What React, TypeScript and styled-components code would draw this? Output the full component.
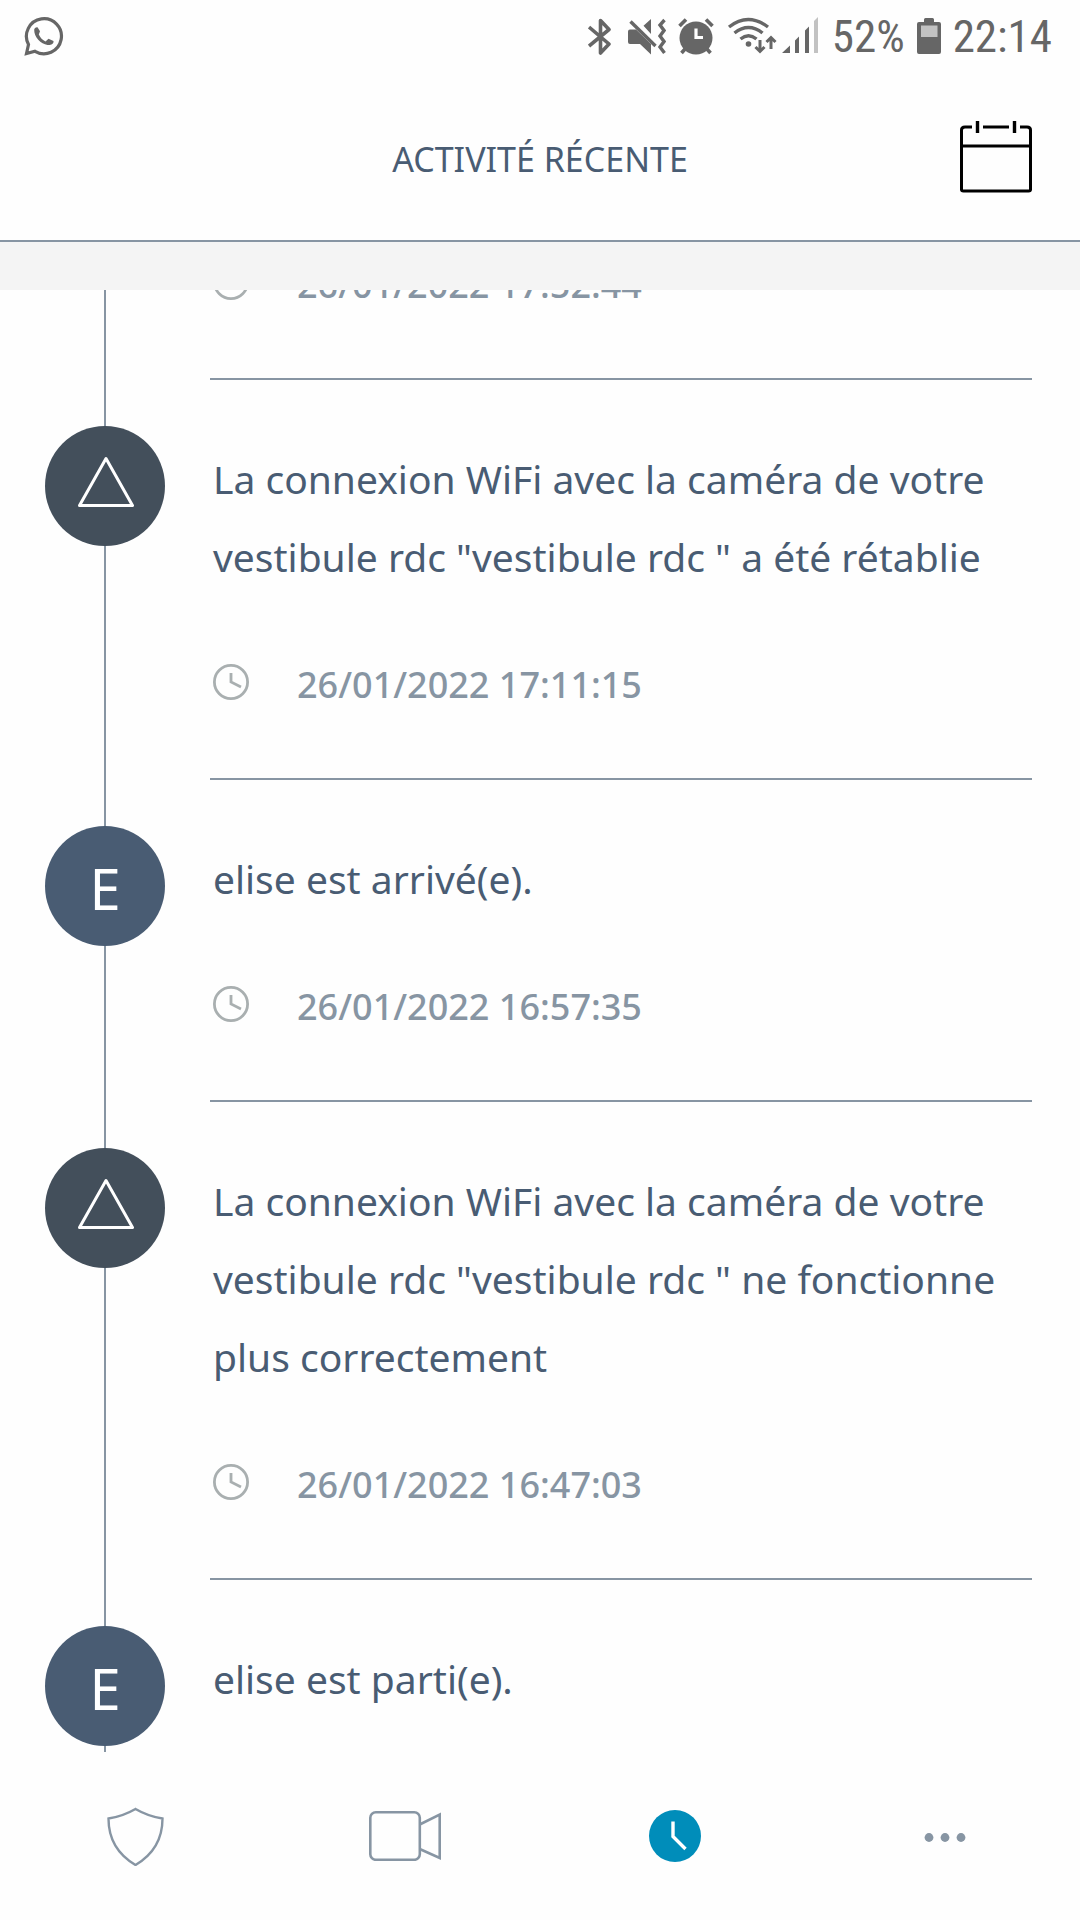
import React from "react";
import styled, { createGlobalStyle } from "styled-components";

const slate = "#495c73";
const mist = "#8795a3";
const statusGrey = "#666666";

const GlobalStyle = createGlobalStyle`
  * { box-sizing: border-box; }
  body { margin: 0; background: #fefefe; }
`;

const Screen = styled.div`
  display: flex;
  flex-direction: column;
  height: 100vh;
  background: #fefefe;
  color: ${slate};
  font-family: "Noto Sans", "Open Sans", sans-serif;
`;

const StatusBar = styled.div`
  display: flex;
  align-items: center;
  justify-content: space-between;
  flex: none;
  height: 74px;
  padding: 0 28px 0 24px;
  color: ${statusGrey};
  font: 45px/48px "Roboto Condensed", Roboto, sans-serif;
`;

const StatusGroup = styled.div`
  display: flex;
  align-items: center;
  gap: 12px;
`;

const Icon = styled.svg`
  display: block;
  flex: none;
`;

const Header = styled.header`
  display: grid;
  grid-template-columns: 1fr auto 1fr;
  align-items: center;
  flex: none;
  height: 168px;
  padding: 0 48px;
  border-bottom: 2px solid ${mist};
`;

const Title = styled.h1`
  grid-column: 2;
  margin: 0;
  padding-top: 4px;
  font-size: 34px;
  line-height: 44px;
  font-weight: 400;
`;

const IconButton = styled.button`
  justify-self: end;
  padding: 0;
  border: 0;
  background: none;
  color: #000;
`;

const Strip = styled.div`
  flex: none;
  height: 48px;
  background: #f4f4f4;
`;

const Feed = styled.main`
  flex: 1;
  min-height: 0;
  overflow: hidden;
  background: linear-gradient(${mist}, ${mist}) 104px 0 / 2px 100% no-repeat;
`;

const EventList = styled.ul`
  margin: -156px 0 0;
  padding: 0;
  list-style: none;
`;

const EventItem = styled.li`
  display: flex;
  padding-right: 48px;
`;

const Rail = styled.div`
  flex: none;
  width: 210px;
  padding: 48px 45px 0;
`;

const Marker = styled.div<{ $color: string }>`
  display: flex;
  align-items: center;
  justify-content: center;
  width: 120px;
  height: 120px;
  border-radius: 50%;
  background: ${(p) => p.$color};
  color: #fff;
`;

const Initial = styled.span`
  padding-top: 4px;
  font-size: 56px;
  line-height: 76px;
`;

const EventBody = styled.div`
  flex: 1;
  min-width: 0;
  padding: 60px 0 65px 3px;
  border-top: 2px solid ${mist};
`;

const Message = styled.p`
  margin: 0;
  font-size: 39px;
  line-height: 78px;
`;

const Stamp = styled.div`
  display: flex;
  align-items: center;
  gap: 48px;
  margin-top: 61px;
  color: ${mist};
  font-size: 36px;
  font-weight: 500;
  line-height: 56px;
`;

const TabBar = styled.nav`
  display: grid;
  grid-template-columns: repeat(4, 1fr);
  flex: none;
  height: 168px;
`;

const Tab = styled.button<{ $active?: boolean }>`
  display: flex;
  align-items: center;
  justify-content: center;
  padding: 0;
  border: 0;
  background: none;
  color: ${(p) => (p.$active ? "#008dba" : mist)};
`;

type Event = { kind?: "alert" | "person"; message?: string; date?: string };

const events: Event[] = [
  { date: "26/01/2022 17:52:44" },
  {
    kind: "alert",
    message: 'La connexion WiFi avec la caméra de votre vestibule rdc "vestibule rdc " a été rétablie',
    date: "26/01/2022 17:11:15",
  },
  { kind: "person", message: "elise est arrivé(e).", date: "26/01/2022 16:57:35" },
  {
    kind: "alert",
    message: 'La connexion WiFi avec la caméra de votre vestibule rdc "vestibule rdc " ne fonctionne plus correctement',
    date: "26/01/2022 16:47:03",
  },
  { kind: "person", message: "elise est parti(e)." },
];

const WhatsAppIcon = () => (
  <Icon width="40" height="40" viewBox="0 0 40 40" fill="none">
    <path d="M2.500 36.500 4.500 27.500A17.500 17.500 0 1 1 11 34.300Z" stroke="currentColor" strokeWidth="3.2" />
    <path
      d="M10.200 12.500C10.500 11 11.500 10 13.500 10.200L16 14.300 14.800 17.500C16.200 20.500 18 22.800 21.500 24.500L24.500 21.800L29.500 24C30 27 26.500 28.500 23.500 28C17 27 9.800 20 10.200 12.500Z"
      fill="currentColor"
    />
  </Icon>
);

const BluetoothIcon = () => (
  <Icon width="28" height="40" viewBox="0 0 28 40" fill="none" stroke="currentColor" strokeWidth="3.6">
    <path d="M1 10 21 27 12.500 36V3.500L21 12.500 1 29" strokeLinejoin="round" />
  </Icon>
);

const MuteVibrateIcon = () => (
  <Icon width="38" height="40" viewBox="0 0 38 40">
    <path d="M0 14.500Q0 12.500 2 12.500H8L23 27V37.500L12 27H2Q0 27 0 25ZM15.500 8.800 23 2V17Z" fill="currentColor" />
    <path d="M2.500 4.500 27.500 29" stroke="currentColor" strokeWidth="3.400" />
    <path d="M36.500 3 32 8 36 13.500 32 19 36 24.500 32 30 36.500 36" fill="none" stroke="currentColor" strokeWidth="3.400" />
  </Icon>
);

const AlarmIcon = () => (
  <Icon width="36" height="40" viewBox="0 0 36 40">
    <circle cx="18" cy="21" r="16.500" fill="currentColor" />
    <path d="M1.500 9 8 2.500M28 2.500 34.500 9M7.500 31.500 3.500 36M28.500 31.500 32.500 36" stroke="currentColor" strokeWidth="3.600" />
    <path d="M18 11.500V20.500H25" fill="none" stroke="#fefefe" strokeWidth="3.200" />
  </Icon>
);

const NetworkIcon = () => (
  <Icon width="94" height="40" viewBox="0 0 94 40" fill="none" stroke="currentColor" strokeWidth="3.400">
    <path d="M3 10Q22 -5 42 10M8.500 16Q22.500 5 36.500 16M14.500 22Q22.500 15.500 30.500 22" />
    <circle cx="22.500" cy="27" r="2.800" fill="currentColor" stroke="none" />
    <path d="M34 23V34M29.500 30 34 34.500 38.500 30M45 32V22M40.500 25 45 20.500 49.500 25" strokeWidth="3" />
    <g fill="currentColor" stroke="none">
      <path d="M56 36 64 28.500V36ZM69 36V23.500L73 19.500V36ZM79 36V13.500L83 9.500V36Z" />
      <path d="M88 36V4L92 0V36Z" fill="#c2c2c2" />
    </g>
  </Icon>
);

const BatteryIcon = () => (
  <Icon width="24" height="40" viewBox="0 0 24 40">
    <path d="M7 5V2.500Q7 1 8.500 1H15.500Q17 1 17 2.500V5H22Q24 5 24 7V35Q24 37 22 37H2Q0 37 0 35V7Q0 5 2 5Z" fill="currentColor" />
    <path d="M4 8.500H20.500V20H4Z" fill="#c2c2c2" />
  </Icon>
);

const CalendarIcon = () => (
  <Icon width="72" height="72" viewBox="0 0 72 72" fill="none" stroke="currentColor" strokeWidth="3">
    <path d="M12 6H5Q1.500 6 1.500 9V68.500Q1.500 70 3.500 70H68.500Q70.500 70 70.500 68.500V9Q70.500 6 67 6H60M1.500 25H70.500M23 6H49" />
    <path d="M17.500 0V12M54.500 0V12" strokeWidth="3.400" />
  </Icon>
);

const ClockIcon = () => (
  <Icon width="36" height="42" viewBox="0 0 36 42" fill="none" stroke="#a9afb0" strokeWidth="2.800">
    <circle cx="18" cy="18" r="16.600" />
    <path d="M18 9V18L28 23" />
  </Icon>
);

const TriangleIcon = () => (
  <Icon width="58" height="60" viewBox="0 0 58 60" fill="none" stroke="currentColor" strokeWidth="3">
    <path d="M30 2.500 56.500 49.500H3.500Z" strokeLinejoin="round" />
  </Icon>
);

const ShieldIcon = () => (
  <Icon width="58" height="60" viewBox="0 0 58 60" fill="none" stroke="currentColor" strokeWidth="2.400">
    <path d="M29.500 3Q42.500 10.500 56.500 12.500Q56.500 43 29.500 59Q2.500 43 2.500 12.500Q16.500 10.500 29.500 3Z" />
  </Icon>
);

const CameraIcon = () => (
  <Icon width="72" height="50" viewBox="0 0 72 50" fill="none" stroke="currentColor" strokeWidth="2.600">
    <rect x="1.300" y="1.300" width="49.500" height="47.500" rx="5.500" />
    <path d="M50.700 13.500 70.700 3.500V47L50.700 38" />
  </Icon>
);

const ActivityIcon = () => (
  <Icon width="52" height="52" viewBox="0 0 52 52">
    <circle cx="26" cy="26" r="26" fill="currentColor" />
    <path d="M24 11.500V26.500L36.500 39" fill="none" stroke="#fff" strokeWidth="3.400" />
  </Icon>
);

const MoreIcon = () => (
  <Icon width="42" height="12" viewBox="0 0 42 12" fill="currentColor">
    <circle cx="5" cy="7.500" r="4.400" />
    <circle cx="21" cy="7.500" r="4.400" />
    <circle cx="37" cy="7.500" r="4.400" />
  </Icon>
);

export default function App() {
  return (
    <Screen>
      <GlobalStyle />
      <StatusBar>
        <WhatsAppIcon />
        <StatusGroup>
          <BluetoothIcon />
          <MuteVibrateIcon />
          <AlarmIcon />
          <NetworkIcon />
          <span>52%</span>
          <BatteryIcon />
          <span>22:14</span>
        </StatusGroup>
      </StatusBar>
      <Header>
        <Title>ACTIVITÉ RÉCENTE</Title>
        <IconButton type="button" aria-label="Calendrier">
          <CalendarIcon />
        </IconButton>
      </Header>
      <Strip />
      <Feed>
        <EventList>
          {events.map((event, i) => (
            <EventItem key={i}>
              <Rail>
                {event.kind === "alert" && (
                  <Marker $color="#434f5b">
                    <TriangleIcon />
                  </Marker>
                )}
                {event.kind === "person" && (
                  <Marker $color={slate}>
                    <Initial>E</Initial>
                  </Marker>
                )}
              </Rail>
              <EventBody>
                {event.message && <Message>{event.message}</Message>}
                {event.date && (
                  <Stamp>
                    <ClockIcon />
                    <time>{event.date}</time>
                  </Stamp>
                )}
              </EventBody>
            </EventItem>
          ))}
        </EventList>
      </Feed>
      <TabBar>
        <Tab type="button" aria-label="Sécurité">
          <ShieldIcon />
        </Tab>
        <Tab type="button" aria-label="Caméras">
          <CameraIcon />
        </Tab>
        <Tab type="button" aria-label="Activité" $active>
          <ActivityIcon />
        </Tab>
        <Tab type="button" aria-label="Plus">
          <MoreIcon />
        </Tab>
      </TabBar>
    </Screen>
  );
}
